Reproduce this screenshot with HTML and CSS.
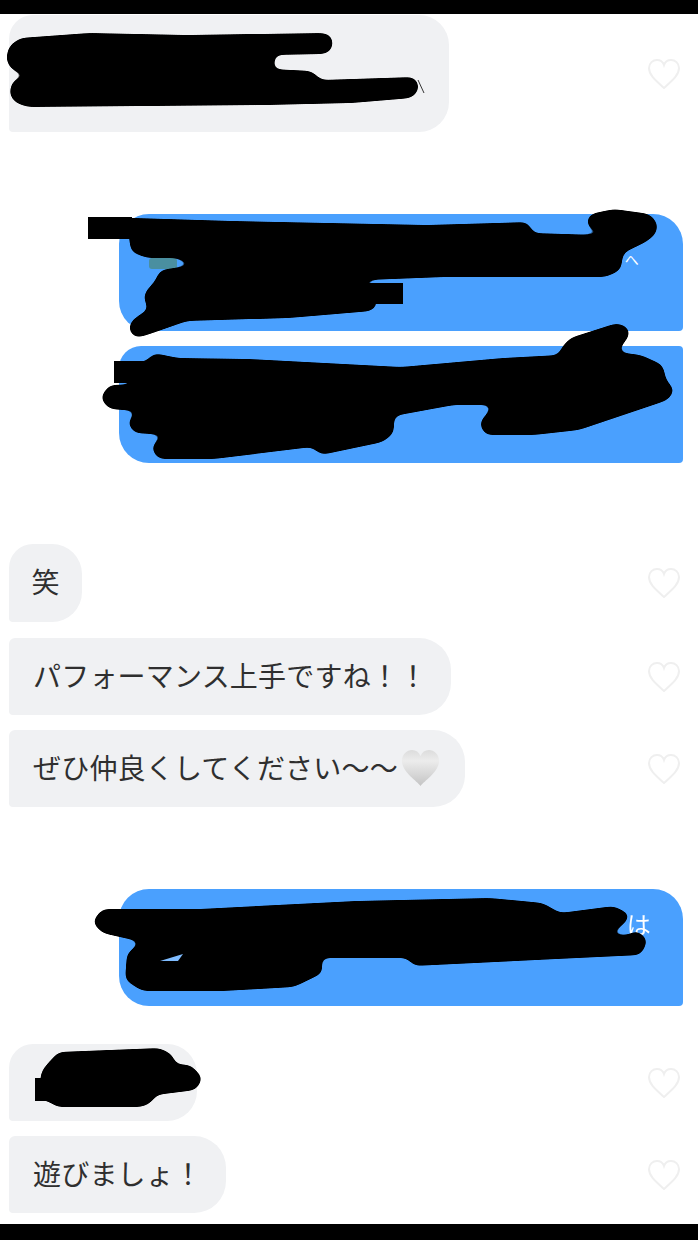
FILE: index.html
```html
<!DOCTYPE html>
<html lang="ja">

<head>
    <meta charset="UTF-8">
    <meta name="viewport" content="width=device-width, initial-scale=1.0">
    <title>メッセージ</title>
    <link rel="stylesheet" href="styles.css">
</head>

<body>
    <div class="page">
        <div class="bar bar-top"></div>
        <main class="chat">
            <div class="row row-first">
                <div class="bubble them them-start tall hidden-a"></div>
                <svg class="like" viewBox="0 0 34 32"><path d="M17 30C8 22 2 17 2 10C2 5 6 2 10 2C13 2 16 4 17 7C18 4 21 2 24 2C28 2 32 5 32 10C32 17 26 22 17 30Z"/></svg>
            </div>

            <div class="row me-row section">
                <div class="bubble me me-start tall"><span class="peek peek-one">へ</span></div>
            </div>
            <div class="row me-row next">
                <div class="bubble me me-end tall"></div>
            </div>

            <div class="row section-short">
                <div class="bubble them them-start short">笑</div>
                <svg class="like" viewBox="0 0 34 32"><path d="M17 30C8 22 2 17 2 10C2 5 6 2 10 2C13 2 16 4 17 7C18 4 21 2 24 2C28 2 32 5 32 10C32 17 26 22 17 30Z"/></svg>
            </div>
            <div class="row after-short">
                <div class="bubble them">パフォーマンス上手ですね！！</div>
                <svg class="like" viewBox="0 0 34 32"><path d="M17 30C8 22 2 17 2 10C2 5 6 2 10 2C13 2 16 4 17 7C18 4 21 2 24 2C28 2 32 5 32 10C32 17 26 22 17 30Z"/></svg>
            </div>
            <div class="row next">
                <div class="bubble them with-emoji">ぜひ仲良くしてください〜〜<svg class="white-heart" viewBox="0 0 37 36">
                        <defs>
                            <linearGradient id="heart-fill" x1="0" y1="0" x2="0" y2="1">
                                <stop offset="0" stop-color="#dcdcdc"/>
                                <stop offset="0.3" stop-color="#ececec"/>
                                <stop offset="1" stop-color="#c4c4c4"/>
                            </linearGradient>
                        </defs>
                        <path fill="url(#heart-fill)" d="M18.5 36C15 31 0 22 0 11C0 4 5 0 10 0C14 0 17 2 18.5 6C20 2 23 0 27 0C32 0 37 4 37 11C37 22 22 31 18.5 36Z"/>
                    </svg></div>
                <svg class="like" viewBox="0 0 34 32"><path d="M17 30C8 22 2 17 2 10C2 5 6 2 10 2C13 2 16 4 17 7C18 4 21 2 24 2C28 2 32 5 32 10C32 17 26 22 17 30Z"/></svg>
            </div>

            <div class="row me-row section">
                <div class="bubble me me-start tall"><span class="peek peek-two">は</span></div>
            </div>

            <div class="row after-me">
                <div class="bubble them them-start hidden-b"></div>
                <svg class="like" viewBox="0 0 34 32"><path d="M17 30C8 22 2 17 2 10C2 5 6 2 10 2C13 2 16 4 17 7C18 4 21 2 24 2C28 2 32 5 32 10C32 17 26 22 17 30Z"/></svg>
            </div>
            <div class="row next">
                <div class="bubble them">遊びましょ！</div>
                <svg class="like" viewBox="0 0 34 32"><path d="M17 30C8 22 2 17 2 10C2 5 6 2 10 2C13 2 16 4 17 7C18 4 21 2 24 2C28 2 32 5 32 10C32 17 26 22 17 30Z"/></svg>
            </div>
        </main>
        <div class="bar bar-bottom"></div>

        <!-- marker scribbles drawn over the messages -->
        <svg class="scribbles" viewBox="0 0 698 1240">
            <defs>
                <!-- rounds the corners off so the polygons read as marker strokes -->
                <filter id="marker" filterUnits="userSpaceOnUse" x="0" y="0" width="698" height="1240">
                    <feGaussianBlur stdDeviation="4"/>
                    <feComponentTransfer>
                        <feFuncA type="linear" slope="14" intercept="-6.5"/>
                    </feComponentTransfer>
                </filter>
            </defs>
            <rect class="emoji-stub" x="149" y="258" width="28" height="11" rx="3"/>
            <g class="ink" filter="url(#marker)">
                <path d="M6 58L9 46L20 38L89 33L187 35L325 33L332 36L333 45L331 51L325 54L274 55L275 62L272 69L312 71L321 80L414 77L418 82L419 90L412 98L352 103L267 105L27 107L14 102L9 93L13 80L35 74L18 73L9 67Z"/>
                <path d="M120 218L134 218L232 221L427 225L528 222L533 233L597 235L608 232L590 229L586 222L590 214L614 209L650 214L658 224L656 234L646 242L623 253L621 270L606 277L445 277L316 282L370 284L378 304L372 311L289 318L187 321L147 335L136 338L129 332L130 322L142 313L149 310L143 297L148 288L154 283L160 270L196 265L176 258L147 258L131 252L128 230Z"/>
                <path d="M130 362L145 362L154 353L178 358L249 359L401 367L503 358L559 355L561 348L570 338L617 323L628 327L630 335L617 352L641 355L663 365L666 380L675 390L668 400L579 430L534 435L485 435L479 423L494 405L454 405L394 416L394 433L383 442L321 455L312 447L214 459L158 459L151 448L157 440L169 435L134 433L127 422L138 411L109 409L100 398L109 385L180 383L130 383Z"/>
                <path d="M92 922L102 909L200 909L356 901L490 898L543 903L560 913L614 906L631 915L623 925L608 935L628 935L637 930L648 940L641 955L557 959L414 966L407 958L321 958L323 973L294 987L223 991L142 991L125 980L127 953L142 942L102 933Z"/>
                <path d="M40 1079L42 1070L58 1052L160 1048L173 1055L175 1064L191 1065L203 1078L196 1090L156 1095L151 1103L142 1107L56 1107L49 1101L40 1101Z"/>
            </g>
            <!-- straight-edged strokes keep their square corners -->
            <g class="ink">
                <rect x="88" y="217" width="44" height="22"/>
                <rect x="360" y="283" width="43" height="21"/>
                <rect x="114" y="361" width="30" height="22"/>
                <rect x="35" y="1078" width="20" height="23"/>
            </g>
            <path class="gap-blue" d="M160 961L183 954L178 961Z"/>
            <path class="stub" d="M418 80L424 93"/>
        </svg>
    </div>
</body>

</html>
```

FILE: styles.css
```css
body {
    margin: 0;
    padding: 0;
    background-color: #ffffff;
    font-family: "Liberation Sans", "Noto Sans CJK JP", sans-serif;
}

.page {
    position: relative;
    width: 698px;
    height: 1240px;
    overflow: hidden;
    display: flex;
    flex-direction: column;
}

.bar {
    background-color: #000000;
}

.bar-top {
    height: 14px;
}

.bar-bottom {
    margin-top: auto;
    height: 16px;
}

.chat {
    padding: 1px 15px 0 9px;
    filter: blur(0.4px);
}

.row {
    display: flex;
    align-items: center;
    justify-content: space-between;
}

.me-row {
    justify-content: flex-end;
}

.section {
    margin-top: 82px;
}

.section-short {
    margin-top: 81px;
}

.next {
    margin-top: 15px;
}

.after-short {
    margin-top: 16px;
}

.after-me {
    margin-top: 38px;
}

.bubble {
    display: flex;
    align-items: center;
    box-sizing: border-box;
    height: 77px;
    padding: 0 24px 4px;
    font-size: 28px;
    letter-spacing: 0.2px;
    color: #2f2f2f;
    white-space: nowrap;
}

.them {
    background-color: #f0f1f3;
    border-radius: 6px 32px 32px 4px;
}

.them-start {
    border-radius: 24px 30px 30px 4px;
}

.me {
    position: relative;
    width: 564px;
    background-color: #4aa0fe;
    color: #ffffff;
}

.me-start {
    border-radius: 30px 30px 4px 30px;
}

.me-end {
    border-radius: 22px 4px 4px 30px;
}

.tall {
    height: 117px;
}

.short {
    height: 78px;
    padding: 0 22.5px 4px;
}

.with-emoji {
    padding-right: 26px;
}

.hidden-a {
    width: 440px;
}

.hidden-b {
    width: 188px;
}

.like {
    width: 34px;
    height: 32px;
    flex-shrink: 0;
    margin-right: 2px;
}

.like path {
    fill: #ffffff;
    stroke: #efefef;
    stroke-width: 2;
}

.white-heart {
    width: 37px;
    height: 36px;
    margin-left: 4px;
    margin-top: 2px;
}

.peek {
    position: absolute;
    line-height: 1;
}

.peek-one {
    right: 44px;
    top: 39px;
    font-size: 14px;
}

.peek-two {
    right: 32px;
    top: 25px;
    font-size: 24px;
}

.scribbles {
    position: absolute;
    left: 0;
    top: 0;
    width: 698px;
    height: 1240px;
}

.ink {
    fill: #000000;
}

.gap-blue {
    fill: #7fbcff;
}

.stub {
    fill: none;
    stroke: #333333;
    stroke-width: 1;
}

.emoji-stub {
    fill: #4a8fa0;
}
```
